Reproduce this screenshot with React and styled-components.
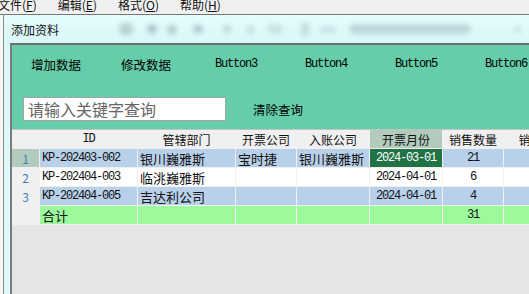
import React from 'react'
import styled, { createGlobalStyle } from 'styled-components'

const GlobalStyle = createGlobalStyle`
  html, body {
    margin: 0;
    padding: 0;
    background: #f0f0f0;
    overflow: hidden;
  }
  * { box-sizing: border-box; }
`

const CJK = `"Noto Sans CJK SC", "Noto Sans", sans-serif`
const MONO = `"Liberation Mono", "Noto Sans CJK SC", monospace`

const Screen = styled.div`
  width: 529px;
  height: 294px;
  display: flex;
  flex-direction: column;
  overflow: hidden;
  background: #f0f0f0;
`

const MenuBar = styled.div`
  height: 15px;
  flex: none;
  display: flex;
  gap: 21px;
  margin-left: -2px;
  border-bottom: 1px solid #767676;
  overflow: hidden;
`

const MenuItem = styled.div`
  font-family: ${CJK};
  font-size: 12px;
  line-height: 14px;
  margin-top: -2px;
  color: #111;
  white-space: nowrap;
  u { text-decoration: underline; text-underline-offset: 1px; }
`

const Desktop = styled.div`
  flex: 1;
  display: flex;
  min-height: 0;
`

const LeftStrip = styled.div`
  width: 4px;
  flex: none;
  background: #f6f7f7;
  border-right: 1px solid #8a8a8a;
`

const Window = styled.div`
  flex: 1;
  display: flex;
  flex-direction: column;
  background: #dff9fa;
  min-width: 0;
`

const TitleBar = styled.div`
  height: 28px;
  flex: none;
  display: flex;
  align-items: center;
  padding-left: 7px;
  background: linear-gradient(#e6fcfc, #d9f7f8);
  overflow: hidden;
`

const Title = styled.div`
  font-family: ${CJK};
  font-size: 12px;
  color: #111;
  white-space: nowrap;
`

const Blob = styled.div`
  flex: none;
  width: ${p => p.$w}px;
  height: ${p => p.$h}px;
  margin-left: ${p => p.$ml}px;
  border-radius: 5px;
  background: #6f8696;
  opacity: ${p => p.$o};
  filter: blur(2.5px);
`

const WindowBody = styled.div`
  flex: 1;
  display: flex;
  min-height: 0;
`

const FrameSide = styled.div`
  width: 6px;
  flex: none;
  background: #def9fa;
`

const Client = styled.div`
  flex: 1;
  display: flex;
  flex-direction: column;
  border-top: 2px solid #6e6e6e;
  border-left: 2px solid #7c7c7c;
  background: #e4e5e7;
  min-width: 0;
  overflow: hidden;
`

const ToolPanel = styled.div`
  height: 85px;
  flex: none;
  background: #66cdaa;
  border-bottom: 1px solid #c4c4c4;
  padding-top: 4px;
`

const ButtonRow = styled.div`
  display: flex;
  gap: 10px;
  padding-left: 4px;
  height: 30px;
`

const FlatButton = styled.button`
  flex: none;
  width: 80px;
  height: 30px;
  border: none;
  background: transparent;
  padding: 0;
  color: #000;
  white-space: nowrap;
  font-family: ${p => (p.$mono ? MONO : CJK)};
  font-size: ${p => (p.$mono ? '12px' : '12.5px')};
  letter-spacing: ${p => (p.$mono ? '-1.2px' : '0')};
`

const SearchRow = styled.div`
  display: flex;
  align-items: center;
  gap: 12px;
  margin-top: 15px;
  padding-left: 11px;
`

const SearchInput = styled.input`
  width: 203px;
  height: 24px;
  border: 1px solid #a3a3a3;
  background: #fff;
  padding: 0 4px;
  font-family: ${CJK};
  font-size: 16px;
  outline: none;
  &::placeholder { color: #666; }
`

const Grid = styled.div`
  display: grid;
  grid-template-columns: 28px 98px 98px 61px 73px 73px 61px 78px;
  grid-auto-rows: 19px;
  width: max-content;
`

const Cell = styled.div`
  background: ${p => p.$bg || '#fff'};
  color: ${p => p.$color || '#111'};
  border-right: 1px solid #eef0f2;
  border-bottom: 1px solid #eef0f2;
  display: flex;
  align-items: center;
  justify-content: ${p => (p.$align === 'left' ? 'flex-start' : 'center')};
  padding-left: ${p => (p.$align === 'left' ? '2px' : '0')};
  font-family: ${p => (p.$mono ? MONO : CJK)};
  font-size: ${p => (p.$mono ? '12px' : p.$head ? '12px' : '13px')};
  letter-spacing: ${p => (p.$mono ? '-1.2px' : '0')};
  white-space: nowrap;
  overflow: hidden;
`

const HEAD_BG = '#f0f0f0'
const SEL_BG = '#b3cbbd'
const BLUE = '#b9d0ea'
const TOTAL = '#9cfa9c'

const rows = [
  { n: 1, id: 'KP-202403-002', dept: '银川巍雅斯', inv: '宝时捷', acc: '银川巍雅斯', month: '2024-03-01', qty: '21' },
  { n: 2, id: 'KP-202404-003', dept: '临洮巍雅斯', inv: '', acc: '', month: '2024-04-01', qty: '6' },
  { n: 3, id: 'KP-202404-005', dept: '吉达利公司', inv: '', acc: '', month: '2024-04-01', qty: '4' },
]

const blobs = [
  { ml: 60, w: 14, h: 12, o: 0.35 },
  { ml: 14, w: 10, h: 10, o: 0.45 },
  { ml: 10, w: 10, h: 9, o: 0.4 },
  { ml: 16, w: 10, h: 8, o: 0.45 },
  { ml: 20, w: 8, h: 8, o: 0.3 },
  { ml: 16, w: 7, h: 9, o: 0.25 },
  { ml: 13, w: 16, h: 10, o: 0.2 },
  { ml: 18, w: 8, h: 14, o: 0.25 },
  { ml: 11, w: 16, h: 5, o: 0.25 },
  { ml: 13, w: 122, h: 10, o: 0.3 },
  { ml: 43, w: 7, h: 7, o: 0.2 },
]

export default function App() {
  return (
    <Screen>
      <GlobalStyle />
      <MenuBar>
        <MenuItem>文件(<u>F</u>)</MenuItem>
        <MenuItem>编辑(<u>E</u>)</MenuItem>
        <MenuItem>格式(<u>O</u>)</MenuItem>
        <MenuItem>帮助(<u>H</u>)</MenuItem>
      </MenuBar>
      <Desktop>
        <LeftStrip />
        <Window>
          <TitleBar>
            <Title>添加资料</Title>
            {blobs.map((b, i) => (
              <Blob key={i} $ml={b.ml} $w={b.w} $h={b.h} $o={b.o} />
            ))}
          </TitleBar>
          <WindowBody>
            <FrameSide />
            <Client>
              <ToolPanel>
                <ButtonRow>
                  <FlatButton>增加数据</FlatButton>
                  <FlatButton>修改数据</FlatButton>
                  <FlatButton $mono>Button3</FlatButton>
                  <FlatButton $mono>Button4</FlatButton>
                  <FlatButton $mono>Button5</FlatButton>
                  <FlatButton $mono>Button6</FlatButton>
                </ButtonRow>
                <SearchRow>
                  <SearchInput placeholder="请输入关键字查询" />
                  <FlatButton>清除查询</FlatButton>
                </SearchRow>
              </ToolPanel>
              <Grid>
                <Cell $bg={HEAD_BG} $head />
                <Cell $bg={HEAD_BG} $head $mono>ID</Cell>
                <Cell $bg={HEAD_BG} $head>管辖部门</Cell>
                <Cell $bg={HEAD_BG} $head>开票公司</Cell>
                <Cell $bg={HEAD_BG} $head>入账公司</Cell>
                <Cell $bg={SEL_BG} $head>开票月份</Cell>
                <Cell $bg={HEAD_BG} $head>销售数量</Cell>
                <Cell $bg={HEAD_BG} $head>销售金额</Cell>

                {rows.map(r => {
                  const bg = r.n % 2 === 1 ? BLUE : '#fff'
                  const sel = r.n === 1
                  return (
                    <React.Fragment key={r.n}>
                      <Cell $bg={sel ? SEL_BG : HEAD_BG} $color="#3b7bc0" $head>{r.n}</Cell>
                      <Cell $bg={bg} $mono $align="left">{r.id}</Cell>
                      <Cell $bg={bg} $align="left">{r.dept}</Cell>
                      <Cell $bg={bg} $align="left">{r.inv}</Cell>
                      <Cell $bg={bg} $align="left">{r.acc}</Cell>
                      <Cell $bg={sel ? '#217346' : bg} $color={sel ? '#fff' : '#111'} $mono>{r.month}</Cell>
                      <Cell $bg={bg} $mono>{r.qty}</Cell>
                      <Cell $bg={bg} />
                    </React.Fragment>
                  )
                })}

                <Cell $bg={HEAD_BG} />
                <Cell $bg={TOTAL} $align="left">合计</Cell>
                <Cell $bg={TOTAL} />
                <Cell $bg={TOTAL} />
                <Cell $bg={TOTAL} />
                <Cell $bg={TOTAL} />
                <Cell $bg={TOTAL} $mono>31</Cell>
                <Cell $bg={TOTAL} />
              </Grid>
            </Client>
          </WindowBody>
        </Window>
      </Desktop>
    </Screen>
  )
}
